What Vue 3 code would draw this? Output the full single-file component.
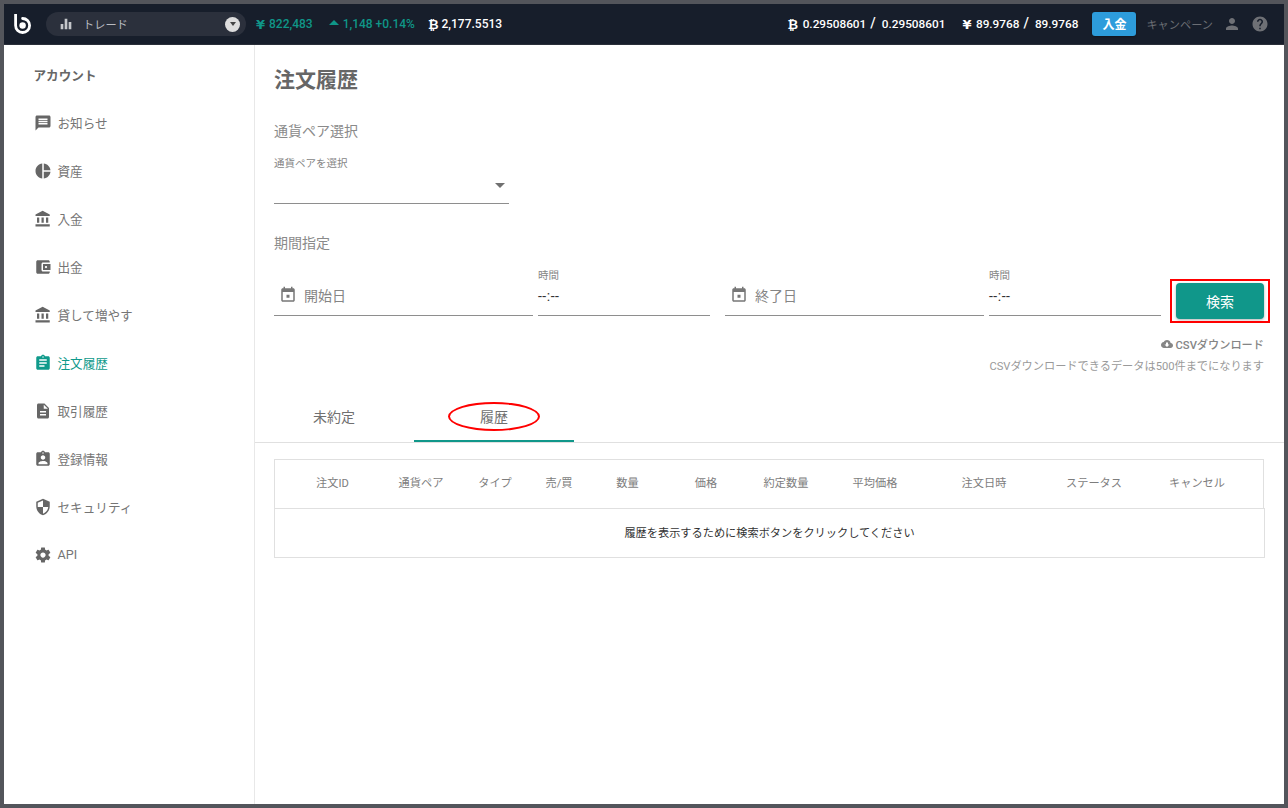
<script setup>
const icons = {
  message: "M20 2H4c-1.1 0-1.99.9-1.99 2L2 22l4-4h14c1.1 0 2-.9 2-2V4c0-1.1-.9-2-2-2zm-2 12H6v-2h12v2zm0-3H6V9h12v2zm0-3H6V6h12v2z",
  pie: "M11 2v20c-5.07-.5-9-4.79-9-10s3.93-9.5 9-10zm2.03 0v8.99H22c-.47-4.74-4.24-8.52-8.97-8.99zm0 11.01V22c4.74-.47 8.5-4.25 8.97-8.99h-8.97z",
  bank: "M4 10v7h3v-7H4zm6 0v7h3v-7h-3zM2 22h19v-3H2v3zm14-12v7h3v-7h-3zm-4.5-9L2 6v2h19V6l-9.5-5z",
  wallet: "M21 18v1c0 1.1-.9 2-2 2H5c-1.11 0-2-.9-2-2V5c0-1.1.89-2 2-2h14c1.1 0 2 .9 2 2v1h-9c-1.11 0-2 .9-2 2v8c0 1.1.89 2 2 2h9zm-9-2h10V8H12v8zm4-2.5c-.83 0-1.5-.67-1.5-1.5s.67-1.5 1.5-1.5 1.5.67 1.5 1.5-.67 1.5-1.5 1.5z",
  assignment: "M19 3h-4.18C14.4 1.84 13.3 1 12 1c-1.3 0-2.4.84-2.82 2H5c-1.1 0-2 .9-2 2v14c0 1.1.9 2 2 2h14c1.1 0 2-.9 2-2V5c0-1.1-.9-2-2-2zm-7 0c.55 0 1 .45 1 1s-.45 1-1 1-1-.45-1-1 .45-1 1-1zm2 14H7v-2h7v2zm3-4H7v-2h10v2zm0-4H7V7h10v2z",
  file: "M14 2H6c-1.1 0-1.99.9-1.99 2L4 20c0 1.1.89 2 1.99 2H18c1.1 0 2-.9 2-2V8l-6-6zm2 16H8v-2h8v2zm0-4H8v-2h8v2zm-3-5V3.5L18.5 9H13z",
  profile: "M19 3h-4.18C14.4 1.84 13.3 1 12 1c-1.3 0-2.4.84-2.82 2H5c-1.1 0-2 .9-2 2v14c0 1.1.9 2 2 2h14c1.1 0 2-.9 2-2V5c0-1.1-.9-2-2-2zm-7 0c.55 0 1 .45 1 1s-.45 1-1 1-1-.45-1-1 .45-1 1-1zm0 4c1.66 0 3 1.34 3 3s-1.34 3-3 3-3-1.34-3-3 1.34-3 3-3zm6 12H6v-1.4c0-2 4-3.1 6-3.1s6 1.1 6 3.1V19z",
  shield: "M12 1L3 5v6c0 5.55 3.84 10.74 9 12 5.16-1.26 9-6.45 9-12V5l-9-4zm0 10.99h7c-.53 4.12-3.28 7.79-7 8.94V12H5V6.3l7-3.11v8.8z",
  gear: "M19.43 12.98c.04-.32.07-.64.07-.98s-.03-.66-.07-.98l2.11-1.65c.19-.15.24-.42.12-.64l-2-3.46c-.12-.22-.39-.3-.61-.22l-2.49 1c-.52-.4-1.08-.73-1.69-.98l-.38-2.65C14.46 2.18 14.25 2 14 2h-4c-.25 0-.46.18-.49.42l-.38 2.65c-.61.25-1.17.59-1.69.98l-2.49-1c-.23-.09-.49 0-.61.22l-2 3.46c-.13.22-.07.49.12.64l2.11 1.65c-.04.32-.07.65-.07.98s.03.66.07.98l-2.11 1.65c-.19.15-.24.42-.12.64l2 3.46c.12.22.39.3.61.22l2.49-1c.52.4 1.08.73 1.69.98l.38 2.65c.03.24.24.42.49.42h4c.25 0 .46-.18.49-.42l.38-2.65c.61-.25 1.17-.59 1.69-.98l2.49 1c.23.09.49 0 .61-.22l2-3.46c.12-.22.07-.49-.12-.64l-2.11-1.65zM12 15.5c-1.93 0-3.5-1.57-3.5-3.5s1.57-3.5 3.5-3.5 3.5 1.57 3.5 3.5-1.57 3.5-3.5 3.5z",
  calendar: "M19 3h-1V1h-2v2H8V1H6v2H5c-1.11 0-1.99.9-1.99 2L3 19c0 1.1.89 2 2 2h14c1.1 0 2-.9 2-2V5c0-1.1-.9-2-2-2zm0 16H5V8h14v11zM10 11.5h4v4h-4z",
  cloud: "M19.35 10.04C18.67 6.59 15.64 4 12 4 9.11 4 6.6 5.64 5.35 8.04 2.34 8.36 0 10.91 0 14c0 3.31 2.69 6 6 6h13c2.76 0 5-2.24 5-5 0-2.64-2.05-4.78-4.65-4.96zM17 13l-5 5-5-5h3V9h4v4h3z",
  person: "M12 12c2.21 0 4-1.79 4-4s-1.79-4-4-4-4 1.79-4 4 1.79 4 4 4zm0 2c-2.67 0-8 1.34-8 4v2h16v-2c0-2.66-5.33-4-8-4z",
  help: "M12 2C6.48 2 2 6.48 2 12s4.48 10 10 10 10-4.48 10-10S17.52 2 12 2zm1 17h-2v-2h2v2zm2.07-7.75l-.9.92C13.45 12.9 13 13.5 13 15h-2v-.5c0-1.1.45-2.1 1.17-2.83l1.24-1.26c.37-.36.59-.86.59-1.41 0-1.1-.9-2-2-2s-2 .9-2 2H8c0-2.21 1.79-4 4-4s4 1.79 4 4c0 .88-.36 1.68-.93 2.25z",
  bars: "M10 20h4V4h-4v16zm-6 0h4v-8H4v8zM16 9v11h4V9h-4z",
}

const menu = [
  { label: "お知らせ", icon: "message" },
  { label: "資産", icon: "pie" },
  { label: "入金", icon: "bank" },
  { label: "出金", icon: "wallet" },
  { label: "貸して増やす", icon: "bank" },
  { label: "注文履歴", icon: "assignment", active: true },
  { label: "取引履歴", icon: "file" },
  { label: "登録情報", icon: "profile" },
  { label: "セキュリティ", icon: "shield" },
  { label: "API", icon: "gear" },
]

const columns = ["注文ID", "通貨ペア", "タイプ", "売/買", "数量", "価格", "約定数量", "平均価格", "注文日時", "ステータス", "キャンセル"]
</script>

<template>
  <div class="frame">
    <header class="topbar">
      <svg class="logo" viewBox="0 0 18 21" width="18" height="21" fill="none" stroke="#fff" stroke-width="2.8">
        <path d="M1.6 0.5V11.5a7 7 0 1 0 7-7" stroke-linecap="round" />
        <circle cx="8.6" cy="11.5" r="3.2" fill="#fff" stroke="none" />
      </svg>
      <div class="pill">
        <svg class="pill-icon" viewBox="0 0 24 24"><path :d="icons.bars" /></svg>
        <span class="pill-text">トレード</span>
        <span class="pill-caret"><i /></span>
      </div>
      <div class="stat teal"><b class="cur">¥</b>822,483</div>
      <div class="stat teal change"><i class="up" />1,148 +0.14%</div>
      <div class="stat btc"><b class="cur">₿</b>2,177.5513</div>

      <div class="spacer" />

      <div class="stat balance"><b class="cur">₿</b>0.29508601<em>/</em>0.29508601</div>
      <div class="stat balance jpy"><b class="cur">¥</b>89.9768<em>/</em>89.9768</div>
      <button class="deposit">入金</button>
      <span class="campaign">キャンペーン</span>
      <svg class="top-icon person" viewBox="0 0 24 24"><path :d="icons.person" /></svg>
      <svg class="top-icon help" viewBox="0 0 24 24"><path :d="icons.help" /></svg>
    </header>

    <div class="body">
      <aside class="sidebar">
        <div class="side-title">アカウント</div>
        <a v-for="item in menu" :key="item.label" class="side-item" :class="{ active: item.active }">
          <svg viewBox="0 0 24 24" width="18" height="18"><path :d="icons[item.icon]" /></svg>
          <span>{{ item.label }}</span>
        </a>
      </aside>

      <main class="main">
        <div class="filters">
          <h1>注文履歴</h1>
          <h2 class="pair-head">通貨ペア選択</h2>
          <div class="select">
            <label>通貨ペアを選択</label>
            <i class="select-arrow" />
          </div>
          <h2 class="range-head">期間指定</h2>
          <div class="range">
            <div class="date-field">
              <svg viewBox="0 0 24 24" width="18" height="18"><path :d="icons.calendar" /></svg>
              <span>開始日</span>
            </div>
            <div class="time-field"><label>時間</label><span>--:--</span></div>
            <div class="date-field second">
              <svg viewBox="0 0 24 24" width="18" height="18"><path :d="icons.calendar" /></svg>
              <span>終了日</span>
            </div>
            <div class="time-field"><label>時間</label><span>--:--</span></div>
            <div class="search-wrap"><button class="search">検索</button></div>
          </div>
          <div class="csv">
            <svg viewBox="0 0 24 24" width="12" height="12"><path :d="icons.cloud" /></svg>
            <span>CSVダウンロード</span>
          </div>
          <p class="csv-note">CSVダウンロードできるデータは500件までになります</p>
        </div>

        <nav class="tabs">
          <a class="tab">未約定</a>
          <a class="tab current">履歴<span class="ring" /></a>
        </nav>

        <section class="table">
          <div class="thead">
            <span v-for="col in columns" :key="col">{{ col }}</span>
          </div>
          <div class="tbody">履歴を表示するために検索ボタンをクリックしてください</div>
        </section>
      </main>
    </div>
  </div>
</template>

<style>
html,
body {
  margin: 0;
  background: #53555b;
}
</style>

<style scoped>
.frame {
  box-sizing: border-box;
  width: 1288px;
  height: 808px;
  padding: 4px;
  display: flex;
  flex-direction: column;
  background: #53555b;
  overflow: hidden;
  font-family: Roboto, "Noto Sans CJK JP", sans-serif;
  color: #666;
}

/* top bar */
.topbar {
  box-sizing: border-box;
  height: 41px;
  flex: none;
  display: flex;
  align-items: center;
  background: #171e2b;
  border-bottom: 1px solid #2a2f39;
  color: #fff;
  font-size: 12px;
  font-weight: 500;
}
.logo {
  margin-left: 10px;
  margin-top: 1px;
  flex: none;
}
.pill {
  width: 200px;
  height: 24px;
  margin-left: 14px;
  padding: 0 6px 0 12px;
  box-sizing: border-box;
  display: flex;
  align-items: center;
  background: #2b303c;
  border-radius: 12px;
}
.pill-icon {
  width: 16px;
  height: 16px;
  fill: #c4c6ca;
}
.pill-text {
  margin-left: 9px;
  font-size: 11.2px;
  font-weight: 400;
  color: #b9bbc0;
}
.pill-caret {
  margin-left: auto;
  width: 15px;
  height: 15px;
  border-radius: 50%;
  background: #ddd;
  display: flex;
  align-items: center;
  justify-content: center;
}
.pill-caret i {
  border: 3.5px solid transparent;
  border-top: 4px solid #444;
  border-bottom: 0;
}
.stat {
  display: flex;
  align-items: center;
  white-space: nowrap;
}
.teal {
  color: #0f9688;
  margin-left: 10px;
}
.cur {
  font-family: "DejaVu Sans", sans-serif;
  font-size: 13px;
  font-weight: 700;
  margin-right: 4px;
}
.change {
  margin-left: 16px;
}
.up {
  border: 5px solid transparent;
  border-bottom: 5px solid #0f9688;
  border-top: 0;
  margin-right: 4px;
  margin-top: -4px;
}
.btc {
  margin-left: 13px;
}
.btc .cur {
  margin-right: 3px;
}
.spacer {
  flex: 1;
}
.balance {
  font-size: 11.8px;
}
.balance .cur {
  margin-right: 4.5px;
}
.balance em {
  font-style: normal;
  font-size: 14px;
  margin: -3px 6px 0 4px;
}
.jpy {
  margin-left: 17px;
}
.deposit {
  width: 44px;
  height: 24px;
  margin-left: 14px;
  padding: 0 0 2px;
  border: 0;
  border-radius: 3px;
  background: #2d9cdb;
  color: #fff;
  font: 700 12px Roboto, "Noto Sans CJK JP", sans-serif;
  box-shadow: 0 1px 2px rgb(0 0 0 / 0.3);
}
.campaign {
  margin-left: 10px;
  font-size: 11.2px;
  font-weight: 400;
  color: #6b6e74;
}
.top-icon {
  width: 18px;
  height: 18px;
  fill: #6e7075;
}
.person {
  margin-left: 10px;
}
.help {
  margin-left: 10px;
  margin-right: 15px;
}

/* sidebar */
.body {
  flex: 1;
  display: flex;
  min-height: 0;
  background: #fff;
}
.sidebar {
  box-sizing: border-box;
  width: 251px;
  flex: none;
  padding: 6px 0 0 29.5px;
  border-right: 1px solid #e8e8e8;
}
.side-title {
  height: 48px;
  line-height: 50px;
  font-size: 12.6px;
  font-weight: 700;
}
.side-item {
  height: 48px;
  display: flex;
  align-items: center;
  gap: 6px;
  font-size: 12.6px;
  color: #757575;
}
.side-item svg {
  fill: #666;
  flex: none;
}
.side-item span {
  margin-bottom: 2px;
}
.side-item.active {
  color: #0f9a8b;
}
.side-item.active svg {
  fill: #0f9a8b;
}

/* filters */
.main {
  flex: 1;
  min-width: 0;
}
.filters {
  padding: 0 20px 0 19px;
}
h1 {
  margin: 0;
  padding-top: 21px;
  height: 28px;
  line-height: 28px;
  font-size: 21px;
  font-weight: 700;
  color: #666;
}
h2 {
  margin: 0;
  font-size: 14px;
  font-weight: 400;
  line-height: 20px;
  color: #8a8a8a;
}
.pair-head {
  margin-top: 27px;
}
.select {
  position: relative;
  width: 235px;
  height: 47px;
  margin-top: 16px;
  box-sizing: border-box;
  border-bottom: 1px solid #8e8e8e;
}
.select label,
.time-field label {
  display: block;
  font-size: 10.5px;
  line-height: 14px;
  color: #858585;
}
.select-arrow {
  position: absolute;
  right: 4px;
  top: 26px;
  border: 5px solid transparent;
  border-top: 5px solid #707070;
  border-bottom: 0;
}
.range-head {
  margin-top: 29px;
}
.range {
  display: flex;
  align-items: flex-start;
  margin-top: 14px;
  height: 49px;
}
.date-field {
  box-sizing: border-box;
  width: 259px;
  height: 39px;
  margin-top: 10px;
  padding: 9px 0 0 4.5px;
  display: flex;
  align-items: flex-start;
  gap: 7.5px;
  border-bottom: 1px solid #8e8e8e;
  font-size: 14px;
  line-height: 20px;
  color: #858585;
}
.date-field svg {
  fill: #777;
  flex: none;
}
.date-field.second {
  margin-left: 15px;
}
.time-field {
  box-sizing: border-box;
  width: 172px;
  height: 49px;
  margin-left: 5px;
  border-bottom: 1px solid #8e8e8e;
}
.time-field label {
  margin-top: 2px;
}
.time-field span {
  display: block;
  margin-top: 4px;
  font-size: 14px;
  line-height: 18px;
  letter-spacing: 0.5px;
  color: #333;
}
.search-wrap {
  position: relative;
  margin: 16px 0 0 15px;
}
.search-wrap::after {
  content: "";
  position: absolute;
  inset: -4px -6px;
  border: 2px solid #f00;
}
.search {
  display: block;
  width: 88px;
  height: 36px;
  border: 0;
  border-radius: 4px;
  background: #10978a;
  color: #fff;
  font: 400 14px Roboto, "Noto Sans CJK JP", sans-serif;
  box-shadow: 0 1px 3px rgb(0 0 0 / 0.3);
}
.csv {
  margin-top: 20px;
  display: flex;
  justify-content: flex-end;
  align-items: center;
  gap: 3px;
  height: 16px;
  font-size: 11.2px;
  font-weight: 500;
  color: #858585;
}
.csv svg {
  fill: #858585;
}
.csv-note {
  margin: 7px 0 0;
  text-align: right;
  font-size: 11.2px;
  line-height: 16px;
  color: #9a9a9a;
}

/* tabs */
.tabs {
  display: flex;
  height: 51px;
  margin-top: 17px;
  box-sizing: border-box;
  border-bottom: 1px solid #e0e0e0;
}
.tab {
  position: relative;
  box-sizing: border-box;
  width: 160px;
  height: 50px;
  padding-top: 15px;
  text-align: center;
  font-size: 14px;
  line-height: 20px;
  color: #707070;
}
.tab:first-child {
  margin-left: -1px;
}
.tab.current {
  border-bottom: 2px solid #10978a;
}
.ring {
  position: absolute;
  left: 50%;
  top: 10px;
  box-sizing: border-box;
  width: 92px;
  height: 29px;
  margin-left: -46px;
  border: 2px solid #f00;
  border-radius: 50%;
}

/* table */
.table {
  margin: 16px 20px 0 19px;
  font-size: 11.2px;
}
.thead {
  box-sizing: border-box;
  height: 49px;
  padding-bottom: 4px;
  display: grid;
  grid-template-columns: 115px 62px 86px 42px 95px 62px 98px 80px 138px 82px 124px;
  align-items: center;
  text-align: center;
  border: 1px solid #e0e0e0;
  border-bottom: 0;
  color: #7d7d7d;
}
.tbody {
  box-sizing: border-box;
  height: 50px;
  padding-bottom: 3px;
  margin-right: -1px;
  display: flex;
  align-items: center;
  justify-content: center;
  border: 1px solid #e0e0e0;
  color: #333;
}
</style>
